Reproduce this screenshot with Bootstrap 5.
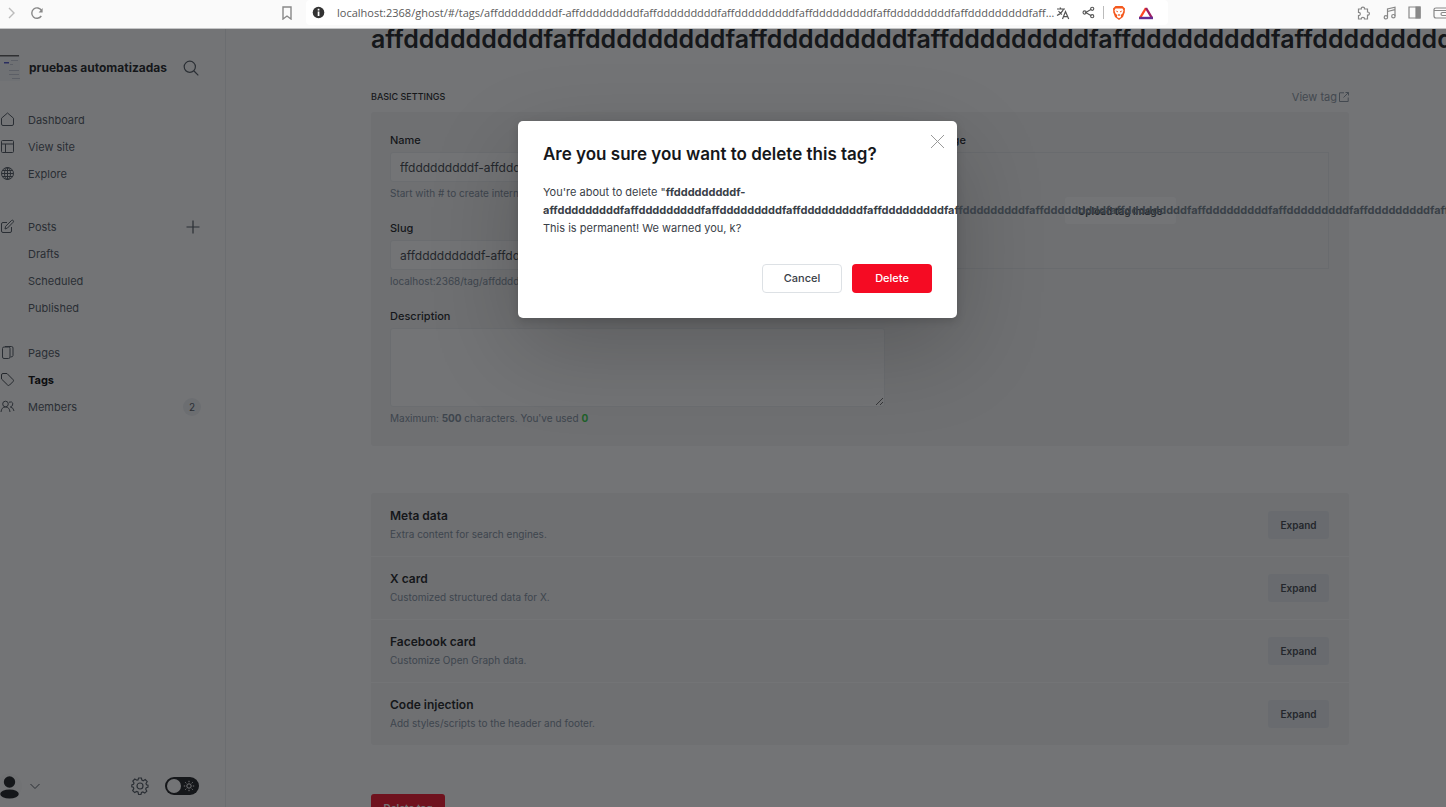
<!DOCTYPE html>
<html lang="en">
<head>
<meta charset="utf-8">
<meta name="viewport" content="width=device-width, initial-scale=1">
<title>Ghost Admin - Tags</title>
<link href="https://cdn.jsdelivr.net/npm/bootstrap@5.3.0/dist/css/bootstrap.min.css" rel="stylesheet">
<style>
body{font:400 11px/18px Inter,sans-serif;color:#4a525b;background:#fff}
svg{fill:none;flex:none;display:block}
svg:not([stroke]){stroke:currentColor}
button{font-family:inherit}
.toolbar{height:29px;background:#fafafa;border-bottom:1px solid #c4c5c6;color:#888;padding-bottom:3px}
.toolbar button,.plain{border:0;background:none;padding:0;color:inherit}
.tool-left{width:306px;padding:0 12px 0 4px}
.address{background:#fff;border-radius:4px;width:862px;height:25px;padding:0 14px 0 6px;color:#555}
.address input{font:11px/18px "Open Sans","Noto Sans",sans-serif;color:#5a5a5a;border:0;outline:0;padding:0;background:none}
.divider{width:1px;height:13px;background:#bbb}
.sidebar{width:226px;border-right:1px solid #ebeef0;padding-bottom:8px}
.site{padding:25px 26px 0 0;height:53px}
.site-name{font-size:12px;font-weight:700;color:#15171a;width:139px}
.side-nav .nav-link{display:flex;align-items:center;height:27px;padding:0;color:#4a525b;gap:13px}
.side-nav .nav-link.sub{padding-left:28px}
.side-nav .nav-link.active{font-weight:700;color:#000}
.side-nav ul+ul{margin-top:26px}
.side-nav ul.last{margin-top:18px}
.count{width:18px;height:18px;border-radius:9px;background:#edf0f3;font-size:10px;text-align:center}
.side-foot{padding:0 26px 0 0}
.switch input{appearance:none;width:34px;height:18px;border-radius:9px;background:#15171a;margin:0;display:block;padding:2px}
.switch input::before{content:"";display:block;width:14px;height:14px;border-radius:7px;background:#fff}
.switch svg{position:absolute;right:4px;top:3px;color:#fff}
.content{padding:0 97px 0 145px}
.tag-title{font-size:25px;line-height:30px;font-weight:600;color:#15171a;margin:-5px 0 34px;white-space:nowrap}
.section-title{font-size:9px;line-height:18px;font-weight:500;color:#15171a;margin:0}
.view-tag{color:#8894a0;text-decoration:none;gap:2px}
.panel{background:#f4f5f6;border-radius:3px}
.basic{padding:19px 20px 20px 19px;margin-top:6px;gap:26px}
.fields{flex:496 1 0;min-width:0}
.picture{flex:418 1 0;min-width:0}
.field{margin-bottom:18px}
.field label,.picture .caption{display:block;font-weight:500;color:#15171a;line-height:18px;margin-bottom:3px}
.field .form-control{font-size:12px;line-height:18px;height:30px;padding:5px 9px;border:1px solid #ebeef0;border-radius:3px;color:#394047;background:#fff}
.field textarea.form-control{height:79px;resize:vertical}
.hint{font-size:10px;line-height:16px;color:#7c8b9a;margin:3px 0 0;white-space:nowrap;overflow:hidden}
.hint .used{color:#30cf43}
.drop{height:117px;border:1px solid #e5e8ea}
.drop button{width:111px;height:27px;border:0;border-radius:3px;background:#fff;color:#394047;font-size:10px;font-weight:600}
.sections{margin-top:47px}
.sect{height:63px;padding:0 20px 0 19px}
.sect+.sect{border-top:1px solid #fff}
.sect h4{font-size:12px;line-height:18px;font-weight:600;color:#15171a;margin:0}
.sect p{font-size:10px;line-height:18px;color:#7c8b9a;margin:0}
.sect button{width:61px;height:28px;border:0;border-radius:3px;background:#e6e9ee;color:#394047;font-size:10px;font-weight:600}
.remove{margin-top:49px;width:74px;height:28px;border:0;border-radius:3px;background:#f50b23;color:#fff;font-size:10px;font-weight:600}
.shade{background:rgba(21,23,26,.6);padding:92px 0 0 29px;overflow:hidden}
.dialog{width:439px;height:fit-content;background:#fff;border-radius:5px;padding:22px 25px 25px;box-shadow:0 30px 90px rgba(0,0,0,.2),0 3px 10px rgba(0,0,0,.15)}
.dialog h1{font-size:17px;line-height:22px;font-weight:600;color:#15171a;margin:0 0 18px}
.dialog p{line-height:18px;margin:0 0 27px;color:#394047}
.dialog .close-x{position:absolute;right:12px;top:13px;color:#999}
.dialog .actions{gap:10px}
.dialog .btn{width:80px;height:29px;font-size:11px;line-height:17px;font-weight:500;padding:5px;border-radius:4px}
.btn-cancel{border:1px solid #dde1e5;color:#394047;background:#fff}
.btn-delete{background:#f50b23;color:#fff}
</style>
</head>
<body class="vh-100 d-flex flex-column overflow-hidden">
<header class="toolbar d-flex align-items-center flex-shrink-0">
  <div class="tool-left d-flex align-items-center">
    <button aria-label="Forward"><svg width="14" height="14" viewBox="0 0 14 14" stroke="#bbb" stroke-width="1.4"><path d="M5 2l5 5-5 5"/></svg></button>
    <button class="ms-2 ps-1" aria-label="Reload"><svg width="14" height="14" viewBox="0 0 14 14" stroke-width="1.4"><path d="M11.3 10A5.200 5.200 0 1 1 11.500 4.500"/><path d="M12.600 2v4.400H8.600z" fill="currentColor" stroke="none"/></svg></button>
    <button class="ms-auto" aria-label="Bookmark"><svg width="14" height="14" viewBox="0 0 14 14" stroke-width="1.400"><path d="M3 1h8v12l-4-3-4 3z"/></svg></button>
  </div>
  <div class="address d-flex align-items-center">
    <svg width="13" height="13" viewBox="0 0 13 13" stroke="none"><circle cx="6.500" cy="6.500" r="5.800" fill="#333"/><path d="M5.700 2.700h1.700v1.700H5.700zM5.700 5.400h1.700v4.600H5.700z" fill="#fff"/></svg>
    <input class="flex-grow-1 ms-2 ps-1" aria-label="Address" value="localhost:2368/ghost/#/tags/affdddddddddf-affdddddddddfaffdddddddddfaffdddddddddfaffdddddddddfaffdddddddddfaffdddddddddfaff…">
    <button aria-label="Translate"><svg width="14" height="14" viewBox="0 0 14 14" stroke-width="1.200"><path d="M1 3h8M4 1.500L5 3M7.500 3C6.500 6 4 8 1 9.500M2.500 5C4 7 5 8 6 8.500M6.500 13L9.500 5.500 12.700 13M7.500 10.700h4"/></svg></button>
    <button class="ms-2 ps-1" aria-label="Share"><svg width="13" height="13" viewBox="0 0 14 14" stroke-width="1.200"><path d="M10 3.500L4 7l6 3.500"/><circle cx="2.800" cy="7" r="1.700"/><circle cx="11" cy="3" r="1.700"/><circle cx="11" cy="11" r="1.700"/></svg></button>
    <span class="divider mx-2 flex-shrink-0"></span>
    <button aria-label="Brave Shields"><svg width="14" height="16" viewBox="0 0 14 16" stroke="none"><path d="M3.500 1h7L13 3.500l-.3 4L11 12l-4 3-4-3-1.700-4.500-.3-4z" fill="#f4581d"/><path d="M3.500 3.500h7l1 2-1 3-1.700 1.500L9 12l-2 1.200L5 12l.2-2L3.500 8.500l-1-3z" fill="#fff"/><path d="M3.500 5.500l2.500.8-.5 1.200zM10.500 5.500L8 6.300l.5 1.200zM5.500 10L7 9l1.500 1L7 11z" fill="#f4581d"/></svg></button>
    <button class="ms-2 ps-1" aria-label="Brave Rewards"><svg width="16" height="14" viewBox="0 0 16 14" stroke-width="2.400"><path d="M8 2L2 12" stroke="#ff4724"/><path d="M8 2l6 10" stroke="#9e1f63"/><path d="M1 12h14" stroke="#662d91"/></svg></button>
  </div>
  <div class="d-flex align-items-center ms-auto gap-2 overflow-hidden">
    <button class="me-1" aria-label="Extensions"><svg width="15" height="14" viewBox="0 0 15 14" stroke-width="1.200"><path d="M3 3h2.300c-.5-2.600 3.700-2.600 3.200 0H11.500v3c2.500-.3 2.500 3.400 0 3.200V13H8.500c.3-2.300-3.500-2.300-3.200 0H2.500V9.500c2.400.2 2.400-3.400 0-3.200V3z"/></svg></button>
    <button class="me-1" aria-label="Playlist"><svg width="13" height="14" viewBox="0 0 13 14" stroke-width="1.200"><path d="M4.500 11V3l7.500-1.800V10M4.500 5.500L12 3.700"/><circle cx="2.900" cy="11.300" r="1.700"/><circle cx="10.400" cy="10.200" r="1.700"/></svg></button>
    <button class="me-1" aria-label="Sidebar"><svg width="13" height="13" viewBox="0 0 13 13" stroke-width="1.200"><path d="M1 1h11v11H1z"/><path d="M8 1h4v11H8z" fill="currentColor"/></svg></button>
    <button aria-label="Wallet"><svg width="13" height="14" viewBox="0 0 13 14" stroke-width="1.200"><path d="M14 12H3Q1 12 1 10V3.500Q1 2 3 2h11M1.500 4.500H14M14 6.500H9.500Q8 6.500 8 8t1.500 1.500H14"/></svg></button>
  </div>
</header>

<div class="position-relative flex-grow-1 overflow-hidden d-flex">
  <nav class="sidebar d-flex flex-column flex-shrink-0" aria-label="Main">
    <div class="site d-flex align-items-center justify-content-between mb-4">
      <div class="d-flex align-items-center gap-2">
        <svg width="21" height="26" viewBox="0 0 21 26" stroke="none"><path fill="#f6f7f9" d="M0 0h20v26H0z"/><path fill="#555" d="M0 0h19v1.500H0z"/><path fill="#4a52c8" d="M4 7h5v1.500H4z"/><path fill="#c5cbd8" d="M11 5h7v1h-7zM10 9h3v1h-3zM9 15h10v1H9zM9 19h10v1H9zM12 23h8v1h-8z"/></svg>
        <span class="site-name text-nowrap">pruebas automatizadas</span>
      </div>
      <button class="plain" aria-label="Search"><svg width="16" height="16" viewBox="0 0 16 16" stroke-width="1.200"><circle cx="6.800" cy="6.800" r="5.600"/><path d="M11 11l4.300 4.300"/></svg></button>
    </div>
    <div class="side-nav">
      <ul class="nav flex-column">
        <li><a class="nav-link" href="#"><svg width="15" height="15" viewBox="0 0 15 15"><path d="M1.500 6.200L7.500 1l6 5.200V12q0 1.500-1.500 1.500H3Q1.500 13.500 1.500 12z"/></svg>Dashboard</a></li>
        <li><a class="nav-link" href="#"><svg width="15" height="15" viewBox="0 0 15 15"><rect x="1.500" y="1.500" width="12" height="12" rx="1"/><path d="M1.500 5h12M5.500 5v8.500"/></svg>View site</a></li>
        <li><a class="nav-link" href="#"><svg width="15" height="15" viewBox="0 0 15 15"><circle cx="7.500" cy="7.500" r="6"/><ellipse cx="7.500" cy="7.500" rx="3" ry="6"/><path d="M7.500 1.500v12M1.500 7.500h12M2.500 4.500h10M2.500 10.500h10"/></svg>Explore</a></li>
      </ul>
      <ul class="nav flex-column">
        <li class="d-flex align-items-center justify-content-between pe-4"><a class="nav-link" href="#"><svg width="15" height="15" viewBox="0 0 15 15"><path d="M7 3.500H3Q1.500 3.500 1.500 5v7q0 1.500 1.500 1.500h7q1.500 0 1.500-1.500V8M5 10l.6-2.700L11.500 1.500q1-.7 1.700 0t0 1.700L7.500 9z"/></svg>Posts</a>
          <button class="plain" aria-label="New post"><svg width="16" height="16" viewBox="0 0 16 16" stroke-width="1.200"><path d="M8 1.500v13M1.500 8h13"/></svg></button></li>
        <li><a class="nav-link sub" href="#">Drafts</a></li>
        <li><a class="nav-link sub" href="#">Scheduled</a></li>
        <li><a class="nav-link sub" href="#">Published</a></li>
      </ul>
      <ul class="nav flex-column last">
        <li><a class="nav-link" href="#"><svg width="15" height="15" viewBox="0 0 15 15"><rect x="2.500" y="2" width="7.500" height="11.500" rx="1.500"/><path d="M5 1.500h6.500Q13 1.500 13 3v7.500q0 1.500-2.500 1.500"/></svg>Pages</a></li>
        <li><a class="nav-link active" href="#"><svg width="15" height="15" viewBox="0 0 15 15" stroke="#394047"><path d="M1.500 3Q1.500 1.500 3 1.500h4L13 7.600q1 1 0 2L9.600 13q-1 1-2 0L1.500 7z"/></svg>Tags</a></li>
        <li class="d-flex align-items-center justify-content-between pe-4"><a class="nav-link" href="#"><svg width="15" height="15" viewBox="0 0 15 15"><circle cx="5.500" cy="5" r="2.800"/><path d="M1 13q.5-5 4.500-5T10 13M9 3.200q3-1 3.800 1 .5 3-2.500 3.800 3.200.5 3.700 4"/></svg>Members</a><span class="count">2</span></li>
      </ul>
    </div>
    <div class="side-foot d-flex align-items-center mt-auto">
      <button class="plain d-flex align-items-center" aria-label="Account"><svg width="22" height="26" viewBox="0 0 22 26" stroke="none"><circle cx="9.500" cy="13" r="12.500" fill="#f9fafa"/><circle cx="9.500" cy="9" r="5.700" fill="#15171a"/><ellipse cx="9.500" cy="21" rx="9.300" ry="4.500" fill="#15171a"/></svg>
        <svg class="ms-2" width="10" height="8" viewBox="0 0 10 8"><path d="M.500 2L5 6.500 9.500 2"/></svg></button>
      <button class="plain ms-auto me-3" aria-label="Settings"><svg width="18" height="18" viewBox="0 0 18 18" stroke-width="1.200"><path d="M7.600 1h2.800l.5 2.100 1.300.6 2-1.200 2 2-1.200 2 .5 1.200 1.500.5v2l-1.700.6-.6 1.300 1.100 2-2 2-2-1.100-1.300.5-.6 2H7.600L7 15l-1.300-.5-2 1.100-2-2 1.100-2-.5-1.300L.8 9.800v-2l1.700-.6.500-1.200-1.200-2 2-2 2 1.200L7 3z"/><circle cx="9" cy="9" r="3"/></svg></button>
      <label class="switch position-relative" aria-label="Dark mode"><input type="checkbox"><svg width="12" height="12" viewBox="0 0 12 12"><circle cx="6" cy="6" r="2.200"/><path d="M6 .8v1.400M6 9.800v1.400M.8 6h1.400M9.800 6h1.400M2.300 2.300l1 1M8.700 8.700l1 1M2.300 9.700l1-1M8.700 3.300l1-1"/></svg></label>
    </div>
  </nav>

  <main class="content flex-grow-1 overflow-hidden">
    <h2 class="tag-title">affdddddddddfaffdddddddddfaffdddddddddfaffdddddddddfaffdddddddddfaffdddddddddfaffddddddddd</h2>
    <div class="d-flex justify-content-between align-items-center">
      <h4 class="section-title">BASIC SETTINGS</h4>
      <a class="view-tag d-flex align-items-center" href="#">View tag<svg width="10" height="10" viewBox="0 0 10 10"><path d="M5 .8H.5v8.700h8.700V5.500M6.500.500h3v3M9.500.500l-5 5"/></svg></a>
    </div>
    <section class="panel basic d-flex">
      <div class="fields">
        <div class="field"><label for="name">Name</label><input id="name" class="form-control" value="ffdddddddddf-affdddddddddfaffdddddddddfaffdddddddddf"><p class="hint">Start with # to create internal tags</p></div>
        <div class="field"><label for="slug">Slug</label><input id="slug" class="form-control" value="affdddddddddf-affdddddddddfaffdddddddddfaffdddddddddf"><p class="hint">localhost:2368/tag/affdddddddddf-affdddddddddf</p></div>
        <div class="field mb-0"><label for="desc">Description</label><textarea id="desc" class="form-control"></textarea><p class="hint">Maximum: <b>500</b> characters. You've used <b class="used">0</b></p></div>
      </div>
      <div class="picture">
        <span class="caption">Tag image</span>
        <div class="drop d-flex align-items-center justify-content-center"><button>Upload tag image</button></div>
      </div>
    </section>
    <div class="panel sections">
      <section class="sect d-flex align-items-center justify-content-between"><div><h4>Meta data</h4><p>Extra content for search engines.</p></div><button>Expand</button></section>
      <section class="sect d-flex align-items-center justify-content-between"><div><h4>X card</h4><p>Customized structured data for X.</p></div><button>Expand</button></section>
      <section class="sect d-flex align-items-center justify-content-between"><div><h4>Facebook card</h4><p>Customize Open Graph data.</p></div><button>Expand</button></section>
      <section class="sect d-flex align-items-center justify-content-between"><div><h4>Code injection</h4><p>Add styles/scripts to the header and footer.</p></div><button>Expand</button></section>
    </div>
    <button class="remove">Delete tag</button>
  </main>

  <div class="shade position-absolute top-0 start-0 w-100 h-100 d-flex justify-content-center align-items-start">
    <div class="dialog position-relative" role="dialog" aria-labelledby="ask">
      <button class="plain close-x" aria-label="Close"><svg width="15" height="15" viewBox="0 0 15 15"><path d="M1 1l13 13M14 1L1 14"/></svg></button>
      <h1 id="ask">Are you sure you want to delete this tag?</h1>
      <p>You're about to delete "<b>ffdddddddddf-affdddddddddfaffdddddddddfaffdddddddddfaffdddddddddfaffdddddddddfaffdddddddddfaffdddddddddfaffdddddddddfaffdddddddddfaffdddddddddfaffdddddddddfaffddddddddd</b><br>This is permanent! We warned you, k?</p>
      <div class="actions d-flex justify-content-end"><button class="btn btn-cancel">Cancel</button><button class="btn btn-delete">Delete</button></div>
    </div>
  </div>
</div>
<script src="https://cdn.jsdelivr.net/npm/bootstrap@5.3.0/dist/js/bootstrap.bundle.min.js"></script>
</body>
</html>
